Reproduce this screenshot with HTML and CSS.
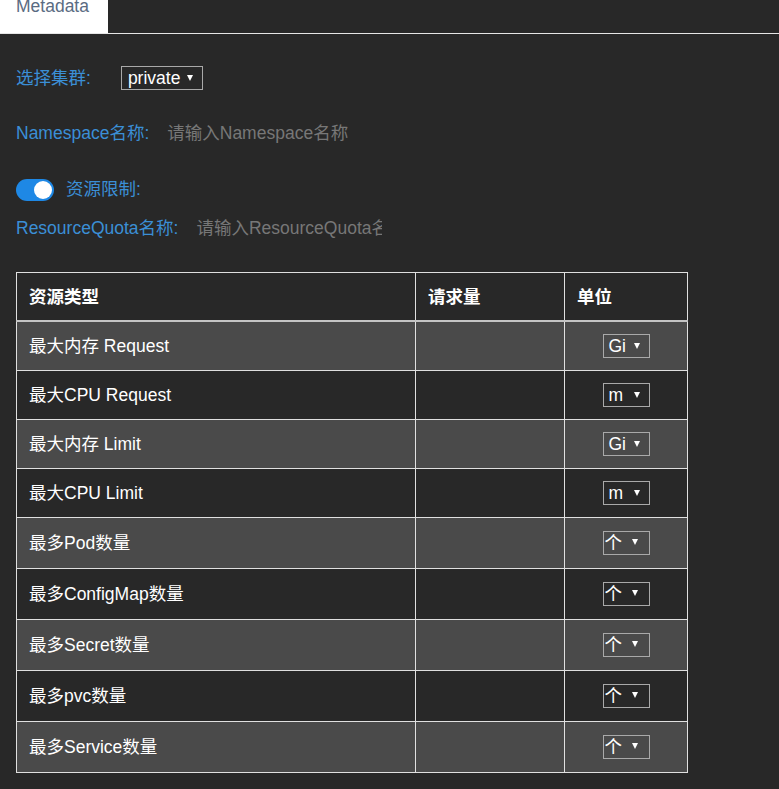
FILE: index.html
```html
<!DOCTYPE html>
<html lang="zh">
<head>
<meta charset="utf-8">
<title>Metadata</title>
<link rel="stylesheet" href="styles.css">
</head>
<body>
<div class="tabs">
  <div class="tab">Metadata</div>
</div>
<div class="form">
  <div class="field field-cluster">
    <span class="label label-cluster">选择集群:</span>
    <span class="select select-cluster">private<i class="caret"></i></span>
  </div>
  <div class="field field-ns">
    <span class="label">Namespace名称:</span>
    <input class="text-input" type="text" placeholder="请输入Namespace名称">
  </div>
  <div class="field field-toggle">
    <span class="toggle"><span class="knob"></span></span>
    <span class="label">资源限制:</span>
  </div>
  <div class="field field-rq">
    <span class="label">ResourceQuota名称:</span>
    <input class="text-input" type="text" placeholder="请输入ResourceQuota名称">
  </div>
  <table class="quota">
    <colgroup>
      <col class="c1"><col class="c2"><col class="c3">
    </colgroup>
    <thead>
      <tr><th>资源类型</th><th>请求量</th><th>单位</th></tr>
    </thead>
    <tbody>
      <tr class="odd"><td>最大内存 Request</td><td></td><td class="unit"><span class="select select-unit">Gi<i class="caret"></i></span></td></tr>
      <tr><td>最大CPU Request</td><td></td><td class="unit"><span class="select select-unit">m<i class="caret"></i></span></td></tr>
      <tr class="odd"><td>最大内存 Limit</td><td></td><td class="unit"><span class="select select-unit">Gi<i class="caret"></i></span></td></tr>
      <tr><td>最大CPU Limit</td><td></td><td class="unit"><span class="select select-unit">m<i class="caret"></i></span></td></tr>
      <tr class="odd tall"><td>最多Pod数量</td><td></td><td class="unit"><span class="select select-unit cjk">个<i class="caret"></i></span></td></tr>
      <tr class="tall"><td>最多ConfigMap数量</td><td></td><td class="unit"><span class="select select-unit cjk">个<i class="caret"></i></span></td></tr>
      <tr class="odd tall"><td>最多Secret数量</td><td></td><td class="unit"><span class="select select-unit cjk">个<i class="caret"></i></span></td></tr>
      <tr class="tall"><td>最多pvc数量</td><td></td><td class="unit"><span class="select select-unit cjk">个<i class="caret"></i></span></td></tr>
      <tr class="odd tall"><td>最多Service数量</td><td></td><td class="unit"><span class="select select-unit cjk">个<i class="caret"></i></span></td></tr>
    </tbody>
  </table>
</div>
</body>
</html>
```

FILE: styles.css
```css
html, body {
  margin: 0;
  padding: 0;
  background: #282828;
}
body {
  font-family: "Liberation Sans", "Noto Sans CJK SC", sans-serif;
  font-size: 17.5px;
  line-height: 20px;
  color: #ffffff;
  height: 789px;
  overflow: hidden;
}
.tabs {
  display: flex;
  height: 33px;
  border-bottom: 1px solid #e6e6e6;
}
.tab {
  width: 108px;
  box-sizing: border-box;
  height: 33px;
  background: #ffffff;
  color: #5a6b82;
  padding-left: 16px;
  line-height: 13px;
}
.form {
  padding: 0 16px;
}
.field {
  display: flex;
  align-items: center;
  height: 24px;
}
.label {
  color: #3b8fd6;
  white-space: nowrap;
}
.field-cluster { margin-top: 32px; }
.label-cluster { margin-right: 30px; }
.field-ns { margin-top: 31px; }
.field-ns .label { margin-right: 18px; }
.field-toggle { margin-top: 34px; height: 22px; }
.field-toggle .label { margin-top: -2px; }
.field-rq { margin-top: 15px; }
.field-rq .label { margin-right: 18px; }

.text-input {
  width: 186px;
  border: none;
  background: transparent;
  padding: 0;
  margin: 0;
  outline: none;
  font: inherit;
  color: #ffffff;
  height: 24px;
}
.text-input::placeholder { color: #777777; }

.select {
  display: inline-flex;
  align-items: center;
  box-sizing: border-box;
  height: 24px;
  border: 1px solid #a9a9a9;
  color: #ffffff;
  line-height: 20px;
}
.select-cluster {
  width: 82px;
  padding-left: 6px;
}
.select-cluster .caret { margin-left: 7px; }
.select-unit {
  width: 47px;
  padding-left: 5px;
  vertical-align: middle;
}
.select-unit .caret { margin-left: auto; margin-right: 9px; }
.select-unit.cjk { padding-left: 1px; }
.select-unit.cjk .caret { margin-right: 11px; margin-top: -3px; }
.caret {
  display: inline-block;
  width: 0;
  height: 0;
  border-left: 3px solid transparent;
  border-right: 3px solid transparent;
  border-top: 6px solid #ffffff;
}

.toggle {
  display: inline-flex;
  align-items: center;
  justify-content: flex-end;
  box-sizing: border-box;
  width: 38px;
  height: 22px;
  border-radius: 11px;
  background: #1e88e5;
  padding-right: 2px;
  margin-right: 12px;
}
.knob {
  width: 18px;
  height: 18px;
  border-radius: 50%;
  background: #ffffff;
}

.quota {
  margin-top: 32px;
  border-collapse: collapse;
  width: 671px;
  table-layout: fixed;
  border: 1px solid #e0e0e0;
}
.c1 { width: 399px; }
.c2 { width: 149px; }
.c3 { width: 123px; }
.quota th, .quota td {
  border: 1px solid #e0e0e0;
  padding: 0 12px;
  text-align: left;
  white-space: nowrap;
}
.quota th {
  height: 47px;
  font-weight: bold;
  border-bottom: 2px solid #c4c4c4;
}
.quota td {
  height: 48px;
}
.quota tr.tall td { height: 50px; }
.quota tr.odd { background: #4a4a4a; }
.quota td.unit {
  text-align: center;
  padding: 0;
}
```
